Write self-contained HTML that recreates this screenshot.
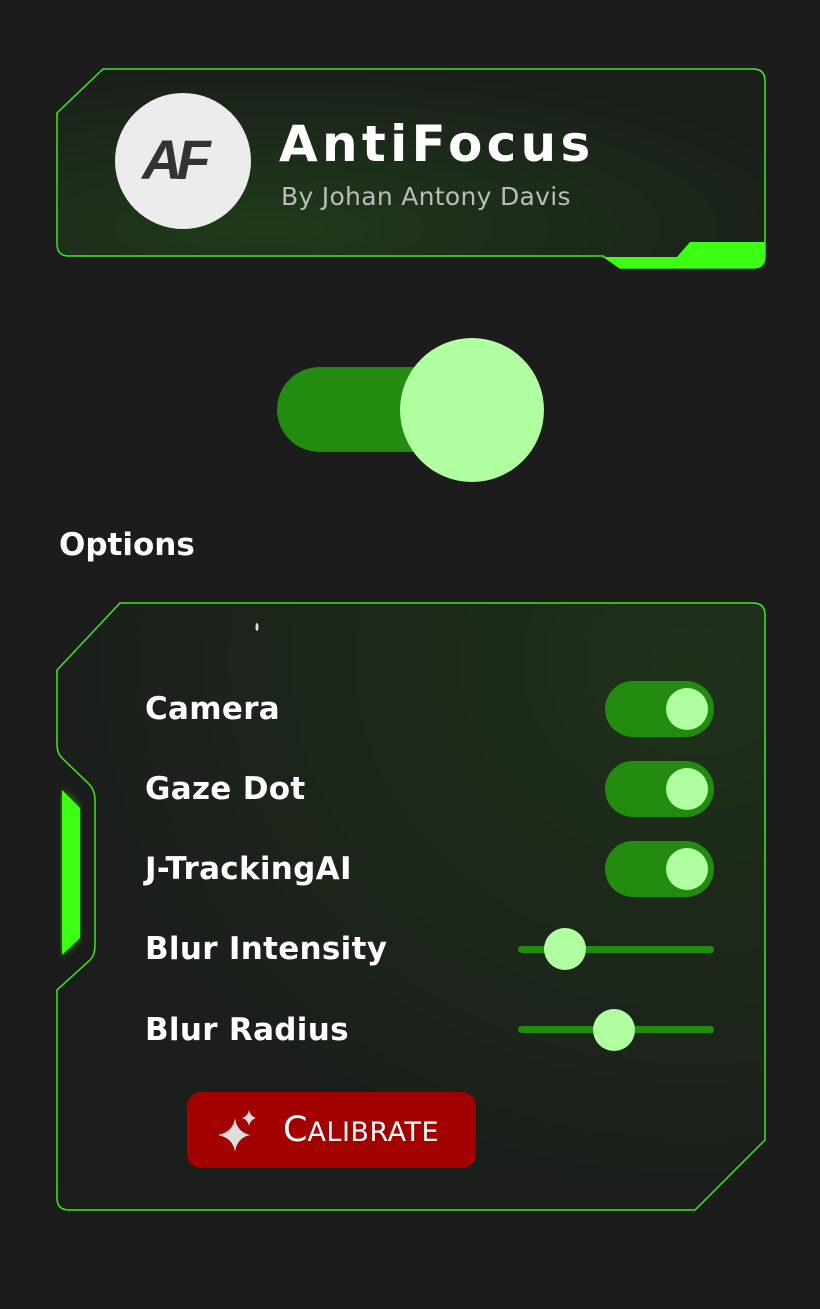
<!DOCTYPE html>
<html><head><meta charset="utf-8"><style>
html,body{margin:0;padding:0}
body{width:820px;height:1309px;background:#1c1c1c;position:relative;overflow:hidden;font-family:"Liberation Sans",sans-serif}
.abs{position:absolute}
.lbl{position:absolute;left:145px;color:#fff;font-size:31px;font-weight:bold;font-family:"DejaVu Sans","Liberation Sans",sans-serif;letter-spacing:0.3px}
.tog{position:absolute;left:605px;width:109px;height:56px;border-radius:28px;background:#228b10}
.tog::after{content:"";position:absolute;left:61px;top:7px;width:42px;height:42px;border-radius:50%;background:#b0ffa0}
.trk{position:absolute;left:518px;width:196px;height:7px;border-radius:4px;background:#228b10}
.knob{position:absolute;width:42px;height:42px;border-radius:50%;background:#b0ffa0}
</style></head><body>
<svg class="abs" style="left:0;top:0" width="820" height="1309">
<defs>
<radialGradient id="g1" cx="0.3" cy="0.8" r="0.8"><stop offset="0" stop-color="#1f3a19"/><stop offset="1" stop-color="#1a1f1a"/></radialGradient>
<radialGradient id="g2" cx="0.9" cy="0.1" r="0.9"><stop offset="0" stop-color="#1e321a"/><stop offset="1" stop-color="#1b1e1b"/></radialGradient>
<filter id="gl"><feGaussianBlur stdDeviation="4"/></filter>
</defs>
<path d="M103 69 H753 Q765 69 765 81 V256 Q765 268 753 268 H620 L603 256 H69 Q57 256 57 244 V113 Z" fill="url(#g1)" stroke="#3ee81c" stroke-width="1.5"/>
<path d="M603 257 H677 L690 242 H765 V258 Q765 268 755 268 H620 Z" fill="#3cff14"/>
<path d="M120 603 H753 Q765 603 765 615 V1140 L695 1210 H69 Q57 1210 57 1198 V990 L90 960 Q95 955 95 945 V800 Q95 790 88 783 L62 758 Q57 753 57 745 V670 Z" fill="url(#g2)" stroke="#3ee81c" stroke-width="1.5"/>
<path d="M62 790 L80 808 V938 L62 955 Z" fill="#3cff14" filter="url(#gl)" opacity="0.6"/>
<path d="M62 790 L80 808 V938 L62 955 Z" fill="#3cff14"/>
<ellipse cx="257" cy="627" rx="1.5" ry="4" fill="#ddd"/>
</svg>
<div class="abs" style="left:115px;top:93px;width:136px;height:136px;border-radius:50%;background:#ececec"></div>
<div class="abs" style="left:142px;top:128px;font:italic bold 56px 'Liberation Sans',sans-serif;color:#333;letter-spacing:-6px;line-height:64px">AF</div>
<div class="abs" style="left:279px;top:114px;font-size:50px;font-weight:bold;color:#fff;font-family:'DejaVu Sans',sans-serif;letter-spacing:4.3px;line-height:60px">AntiFocus</div>
<div class="abs" style="left:281px;top:182px;font-size:25px;color:#bbb;font-family:'DejaVu Sans',sans-serif;line-height:30px;letter-spacing:0.3px">By Johan Antony Davis</div>
<div class="abs" style="left:277px;top:367px;width:200px;height:85px;border-radius:43px;background:#228b10"></div>
<div class="abs" style="left:400px;top:338px;width:144px;height:144px;border-radius:50%;background:#b0ffa0"></div>
<div class="abs" style="left:59px;top:527px;color:#fff;font-size:31px;font-weight:bold;font-family:'DejaVu Sans',sans-serif">Options</div>
<div class="lbl" style="top:691px">Camera</div>
<div class="lbl" style="top:771px">Gaze Dot</div>
<div class="lbl" style="top:851px">J-TrackingAI</div>
<div class="lbl" style="top:931px">Blur Intensity</div>
<div class="lbl" style="top:1012px">Blur Radius</div>
<div class="tog" style="top:681px"></div>
<div class="tog" style="top:761px"></div>
<div class="tog" style="top:841px"></div>
<div class="trk" style="top:946px"></div>
<div class="knob" style="left:544px;top:928px"></div>
<div class="trk" style="top:1026px"></div>
<div class="knob" style="left:593px;top:1009px"></div>
<div class="abs" style="left:187px;top:1092px;width:289px;height:76px;border-radius:14px;background:#a30000"></div>
<svg class="abs" style="left:214px;top:1110px" width="46" height="44"><path d="M21 8 Q23 22 36 25 Q23 28 21 42 Q19 28 4 25 Q19 22 21 8Z" fill="#ddd"/><path d="M35 0 Q36 6 42 8 Q36 10 35 16 Q34 10 28 8 Q34 6 35 0Z" fill="#ddd"/></svg>
<div class="abs" style="left:283px;top:1110px;color:#fff;font-size:35px;font-family:'DejaVu Sans',sans-serif;line-height:40px">C<span style="font-size:27px;letter-spacing:0.5px">ALIBRATE</span></div>
</body></html>
